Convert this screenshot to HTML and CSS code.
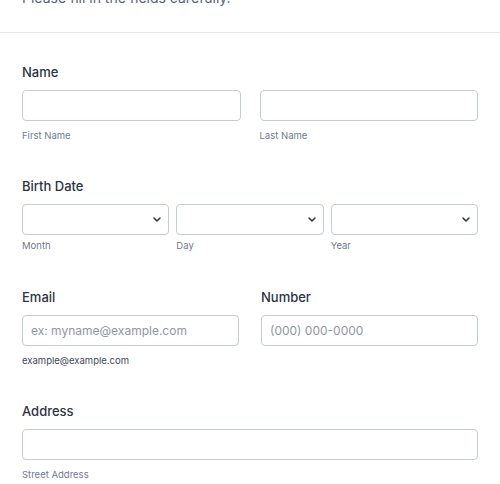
FILE: index.html
```html
<!DOCTYPE html>
<html lang="en">
<head>
    <meta charset="UTF-8">
    <meta name="viewport" content="width=device-width, initial-scale=1.0">
    <title>Registration Form</title>
    <link rel="stylesheet" href="styles.css">
</head>
<body>

    <div class="form-header">
        <p class="subtitle">Please fill in the fields carefully.</p>
    </div>

    <form class="form-body">
        <div class="field">
            <label class="field-label">Name</label>
            <div class="row two">
                <div class="cell">
                    <input type="text" class="text-input">
                    <span class="sublabel">First Name</span>
                </div>
                <div class="cell">
                    <input type="text" class="text-input">
                    <span class="sublabel">Last Name</span>
                </div>
            </div>
        </div>

        <div class="field date-field">
            <label class="field-label">Birth Date</label>
            <div class="row three">
                <div class="cell">
                    <div class="select-box"><svg width="8" height="5" viewBox="0 0 8 5"><path d="M1 1l3 3 3-3" fill="none" stroke="#2c3345" stroke-width="1.5" stroke-linecap="round" stroke-linejoin="round"/></svg></div>
                    <span class="sublabel tight">Month</span>
                </div>
                <div class="cell">
                    <div class="select-box"><svg width="8" height="5" viewBox="0 0 8 5"><path d="M1 1l3 3 3-3" fill="none" stroke="#2c3345" stroke-width="1.5" stroke-linecap="round" stroke-linejoin="round"/></svg></div>
                    <span class="sublabel tight">Day</span>
                </div>
                <div class="cell">
                    <div class="select-box"><svg width="8" height="5" viewBox="0 0 8 5"><path d="M1 1l3 3 3-3" fill="none" stroke="#2c3345" stroke-width="1.5" stroke-linecap="round" stroke-linejoin="round"/></svg></div>
                    <span class="sublabel tight">Year</span>
                </div>
            </div>
        </div>

        <div class="row two wide-gap">
            <div class="field">
                <label class="field-label">Email</label>
                <input type="text" class="text-input" placeholder="ex: myname@example.com">
                <span class="sublabel dark">example@example.com</span>
            </div>
            <div class="field">
                <label class="field-label">Number</label>
                <input type="text" class="text-input" placeholder="(000) 000-0000">
            </div>
        </div>

        <div class="field">
            <label class="field-label">Address</label>
            <input type="text" class="text-input">
            <span class="sublabel">Street Address</span>
        </div>
    </form>

</body>
</html>
```

FILE: styles.css
```css
body {
    margin: 0;
    background: #fff;
    font-family: Inter, "Noto Sans", sans-serif;
    color: #2c3345;
    overflow: hidden;
}

.form-header {
    display: flow-root;
    padding: 0 22px;
    height: 32px;
    border-bottom: 1px solid #e3e5ec;
}

.subtitle {
    margin: -12px 0 0;
    font-size: 14px;
    line-height: 20px;
    color: #57647e;
}

.form-body {
    padding: 29px 22px 0;
}

.field {
    display: flex;
    flex-direction: column;
    margin-bottom: 33px;
}

.date-field {
    margin-bottom: 34px;
}

.field-label {
    font-size: 13px;
    line-height: 20px;
    font-weight: 500;
    margin-bottom: 8px;
}

.row {
    display: grid;
}

.row.two {
    grid-template-columns: 1fr 1fr;
    column-gap: 19px;
}

.row.three {
    grid-template-columns: 1fr 1fr 1fr;
    column-gap: 7px;
}

.row.wide-gap {
    column-gap: 22px;
}

.cell {
    display: flex;
    flex-direction: column;
}

.text-input,
.select-box {
    box-sizing: border-box;
    width: 100%;
    height: 31px;
    border: 1px solid #c3cad8;
    border-radius: 4px;
    background: #fff;
    margin: 0;
}

.text-input {
    padding: 0 8px;
    font-family: inherit;
    font-size: 12px;
    color: #2c3345;
}

.text-input::placeholder {
    color: #8f96a3;
}

.select-box {
    display: flex;
    align-items: center;
    justify-content: flex-end;
    padding-right: 7px;
}

.sublabel {
    margin-top: 8px;
    font-size: 9.5px;
    line-height: 14px;
    color: #6f7a91;
}

.sublabel.tight {
    margin-top: 4px;
}

.sublabel.dark {
    color: #3e4759;
}
```
